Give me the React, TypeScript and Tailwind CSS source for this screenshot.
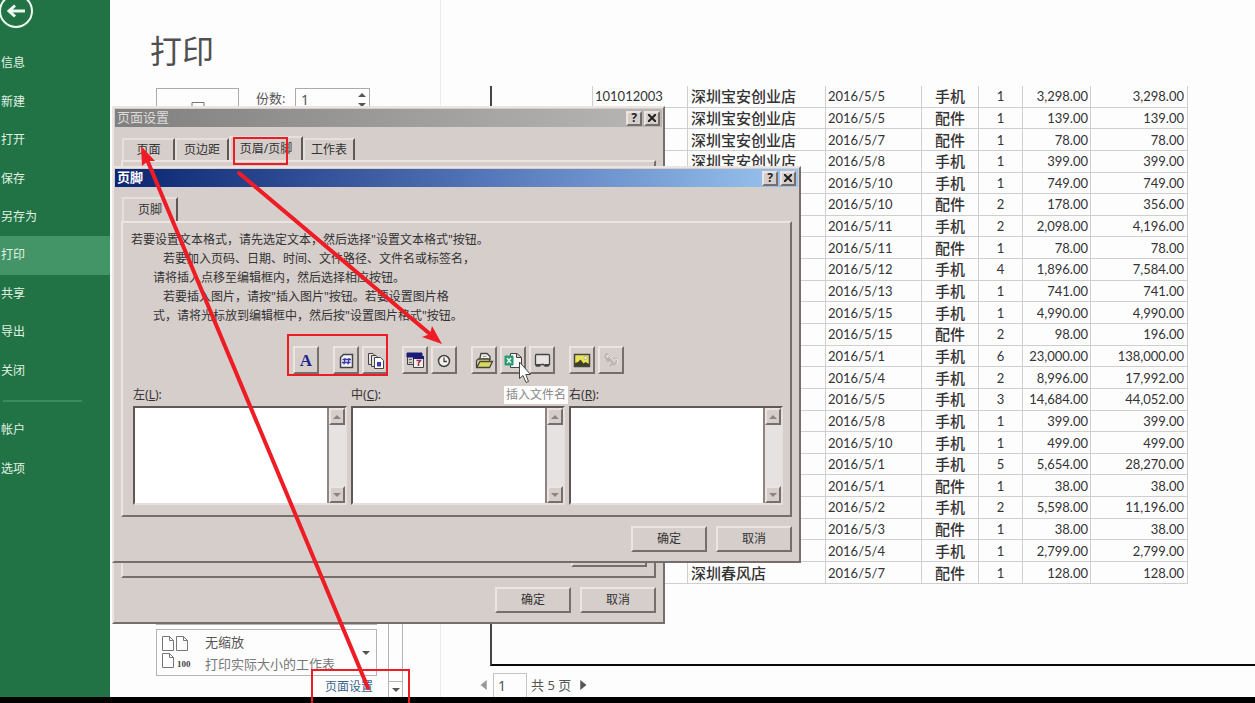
import type { ReactNode } from 'react';

const FONT = "font-['Noto_Sans','Noto_Sans_CJK_SC',sans-serif]";
const RAISED =
  'border-2 border-t-[#ebe4e1] border-l-[#ebe4e1] border-r-[#756e6b] border-b-[#756e6b] bg-[#d6cecb]';

const NAV = ['信息', '新建', '打开', '保存', '另存为', '打印', '共享', '导出', '关闭'];

// [id, shop, date, category, qty, price, amount]
const ROWS = [
  ['101012003', '深圳宝安创业店', '2016/5/5', '手机', '1', '3,298.00', '3,298.00'],
  ['', '深圳宝安创业店', '2016/5/5', '配件', '1', '139.00', '139.00'],
  ['', '深圳宝安创业店', '2016/5/7', '配件', '1', '78.00', '78.00'],
  ['', '深圳宝安创业店', '2016/5/8', '手机', '1', '399.00', '399.00'],
  ['', '', '2016/5/10', '手机', '1', '749.00', '749.00'],
  ['', '', '2016/5/10', '配件', '2', '178.00', '356.00'],
  ['', '', '2016/5/11', '手机', '2', '2,098.00', '4,196.00'],
  ['', '', '2016/5/11', '配件', '1', '78.00', '78.00'],
  ['', '', '2016/5/12', '手机', '4', '1,896.00', '7,584.00'],
  ['', '', '2016/5/13', '手机', '1', '741.00', '741.00'],
  ['', '', '2016/5/15', '手机', '1', '4,990.00', '4,990.00'],
  ['', '', '2016/5/15', '配件', '2', '98.00', '196.00'],
  ['', '', '2016/5/1', '手机', '6', '23,000.00', '138,000.00'],
  ['', '', '2016/5/4', '手机', '2', '8,996.00', '17,992.00'],
  ['', '', '2016/5/5', '手机', '3', '14,684.00', '44,052.00'],
  ['', '', '2016/5/8', '手机', '1', '399.00', '399.00'],
  ['', '', '2016/5/10', '手机', '1', '499.00', '499.00'],
  ['', '', '2016/5/1', '手机', '5', '5,654.00', '28,270.00'],
  ['', '', '2016/5/1', '配件', '1', '38.00', '38.00'],
  ['', '', '2016/5/2', '手机', '2', '5,598.00', '11,196.00'],
  ['', '', '2016/5/3', '配件', '1', '38.00', '38.00'],
  ['', '', '2016/5/4', '手机', '1', '2,799.00', '2,799.00'],
  ['', '深圳春风店', '2016/5/7', '配件', '1', '128.00', '128.00'],
];

const CELL = [
  'w-[95px] pl-[2px] text-left',
  'w-[138px] pl-[3px] text-left text-[15px] font-medium',
  'w-[96px] pl-[2px] text-left',
  'w-[57px] text-center text-[15px] font-medium',
  'w-[44px] text-center',
  'w-[68px] pr-[2px] text-right',
  'w-[97px] pr-[3px] text-right',
];

const Triangle = ({ d, className }: { d: string; className: string }) => (
  <svg className={className} viewBox="0 0 8 8" aria-hidden="true">
    <path d={d} fill="currentColor" />
  </svg>
);
const UP = 'M0 6L4 2L8 6Z';
const DOWN = 'M0 2L4 6L8 2Z';
const LEFT = 'M7 0L2 4L7 8Z';
const RIGHT = 'M1 0L6 4L1 8Z';

const Sidebar = () => (
  <nav className="w-[110px] shrink-0 bg-[#217346] text-xs text-[#e0f2e4]">
    <div className="h-11 overflow-hidden">
      <button aria-label="返回" className="-mt-1 block">
        <svg width="34" height="34" viewBox="0 0 34 34" fill="none" stroke="#eef8ee" strokeWidth="2">
          <circle cx="16" cy="15" r="16" />
          <path d="M9 15H25M15 9.500L9 15L15 20.500" strokeWidth="3" />
        </svg>
      </button>
    </div>
    <div className="grid h-[346px] grid-rows-9">
      {NAV.map((item) => (
        <button
          key={item}
          className={item === '打印' ? 'bg-[#439467] pl-px text-left' : 'pl-px text-left'}
        >
          {item}
        </button>
      ))}
    </div>
    <hr className="mt-[10px] mr-7 mb-2 ml-[3px] border-t-2 border-[#3d8a60]" />
    <button className="block h-[39px] w-full pl-px text-left">帐户</button>
    <button className="block h-[39px] w-full pl-px text-left">选项</button>
  </nav>
);

const Settings = () => (
  <section className="flex w-[331px] shrink-0 flex-col border-r border-[#ececec] text-[#555]">
    <h1 className="mt-7 ml-10 text-[32px] leading-[46px] text-[#505050]">打印</h1>
    <div className="mt-[14px] ml-[46px] flex items-start">
      <button
        aria-label="打印"
        className="flex h-20 w-[83px] justify-center border border-[#ababab] pt-3"
      >
        <svg width="32" height="32" viewBox="0 0 32 32" fill="none" stroke="#777">
          <path d="M10 10V1.500H22V10M3 10H29V24H3ZM9 18H23V30H9Z" />
        </svg>
      </button>
      <label htmlFor="copies" className="mt-px ml-[17px] w-[39px] text-[13px]">
        份数:
      </label>
      <div className="flex h-6 w-[75px] items-center border border-[#ababab] pr-[3px]">
        <input id="copies" defaultValue="1" className="w-full min-w-0 pl-[5px] text-sm outline-none" />
        <div className="flex flex-col gap-[2px]">
          <Triangle d={UP} className="h-2 w-2" />
          <Triangle d={DOWN} className="h-2 w-2" />
        </div>
      </div>
    </div>
    <div className="mt-auto flex">
      <div className="ml-[46px] w-[221px]">
        <div className="h-5 border border-t-0 border-[#b5b5b5]" />
        <div className="mt-1 flex h-[47px] items-center border border-[#b5b5b5] pr-[6px] pl-1">
          <svg width="30" height="36" viewBox="0 0 30 36" fill="none" stroke="#777">
            <path d="M1.500 1.500H8.500L12.500 5.500V15.500H1.500ZM8.500 1.500V5.500H12.500" />
            <path d="M15.500 1.500H22.500L26.500 5.500V15.500H15.500ZM22.500 1.500V5.500H26.500" />
            <path d="M1.500 18.500H8.500L12.500 22.500V32.500H1.500ZM8.500 18.500V22.500H12.500" />
            <text
              x="16"
              y="32"
              fontSize="9"
              fontWeight="700"
              stroke="none"
              fill="#444"
              fontFamily="Liberation Serif, serif"
            >
              100
            </text>
          </svg>
          <div className="ml-[14px] flex-1 text-[13px] leading-[22px]">
            <select
              aria-label="缩放"
              className="block h-[22px] w-full appearance-none bg-transparent outline-none"
            >
              <option>无缩放</option>
            </select>
            <p className="whitespace-nowrap text-[#777]">打印实际大小的工作表</p>
          </div>
          <Triangle d={DOWN} className="h-2 w-2" />
        </div>
        <div className="h-[21px] pr-1 text-right text-xs leading-[21px]">
          <a href="#" className="text-[#37648c]">
            页面设置
          </a>
        </div>
      </div>
      <div className="ml-[11px] flex w-[15px] flex-col border border-b-0 border-[#b5b5b5]">
        <div className="flex-1" />
        <button
          aria-label="向下滚动"
          className="flex h-4 items-center justify-center border-t border-[#b5b5b5]"
        >
          <Triangle d={DOWN} className="h-2 w-2" />
        </button>
      </div>
    </div>
  </section>
);

const Preview = () => (
  <section className="flex min-w-0 flex-1 flex-col pt-[86px]">
    <div className="ml-[49px] flex-1 border-b-2 border-l-2 border-b-[#0a0a0a] border-l-[#444]">
      <table className="ml-[100px] h-[498px] table-fixed border-collapse font-['Lato','Noto_Sans_CJK_SC',sans-serif] text-[13px] leading-[18px] text-[#333]">
        <tbody>
          {ROWS.map((row, r) => (
            <tr key={r}>
              {row.map((value, c) => (
                <td key={c} className={`border border-t-0 border-[#cfcfd2] py-0 ${CELL[c]}`}>
                  {value}
                </td>
              ))}
            </tr>
          ))}
        </tbody>
      </table>
    </div>
    <div className="flex h-[31px] items-end pl-[37px] text-[13px] text-[#555]">
      <button aria-label="上一页" className="flex h-6 items-center text-[#999]">
        <Triangle d={LEFT} className="h-[10px] w-[10px]" />
      </button>
      <input
        aria-label="页码"
        defaultValue="1"
        className="ml-[5px] h-6 w-[34px] border border-b-0 border-[#c4c4c4] pl-1 text-sm outline-none"
      />
      <span className="ml-1 leading-6">共 5 页</span>
      <button aria-label="下一页" className="ml-2 flex h-6 items-center text-[#555]">
        <Triangle d={RIGHT} className="h-[10px] w-[10px]" />
      </button>
    </div>
  </section>
);

const TitleBar = ({ title, className }: { title: string; className: string }) => (
  <header className={`flex h-[18px] items-center gap-[2px] px-[2px] text-[13px] ${className}`}>
    <h2 className="flex-1">{title}</h2>
    <button
      aria-label="帮助"
      className={`flex h-[15px] w-4 items-center justify-center text-xs font-bold text-[#222] ${RAISED}`}
    >
      ?
    </button>
    <button
      aria-label="关闭"
      className={`flex h-[15px] w-4 items-center justify-center ${RAISED}`}
    >
      <svg width="8" height="8" viewBox="0 0 8 8" stroke="#222" strokeWidth="2">
        <path d="M0 0L8 8M8 0L0 8" />
      </svg>
    </button>
  </header>
);

const Tab = ({ label, className }: { label: string; className: string }) => (
  <button
    role="tab"
    className={`border-t-2 border-r-2 border-l-2 border-t-[#e6dfdc] border-r-[#5f5856] border-l-[#e6dfdc] text-xs ${className}`}
  >
    {label}
  </button>
);

const Actions = () => (
  <footer className="mt-[9px] flex justify-end gap-[9px] pr-[6px] pb-2 text-xs">
    <button className={`h-[26px] w-[76px] ${RAISED}`}>确定</button>
    <button className={`h-[26px] w-[76px] ${RAISED}`}>取消</button>
  </footer>
);

const PageSetupDialog = () => (
  <div
    role="dialog"
    aria-label="页面设置"
    className={`absolute top-[106px] left-28 w-[553px] p-px text-[#333] ${RAISED}`}
  >
    <TitleBar title="页面设置" className="bg-linear-to-r from-[#808080] to-[#b9b7b5] text-[#dedad7]" />
    <div role="tablist" className="mt-[9px] flex h-6 items-end pl-[7px]">
      <Tab label="页面" className="h-[22px] w-[53px]" />
      <Tab label="页边距" className="h-[22px] w-[54px]" />
      <Tab label="页眉/页脚" className="h-6 w-[74px]" />
      <Tab label="工作表" className="h-[22px] w-[52px]" />
    </div>
    <div className={`mx-[6px] flex h-[418px] items-end justify-end pr-[7px] pb-[9px] ${RAISED}`}>
      <button aria-label="选项" className={`h-[26px] w-[76px] ${RAISED}`} />
    </div>
    <Actions />
  </div>
);

const ToolButton = ({ label, children }: { label: string; children: ReactNode }) => (
  <button
    aria-label={label}
    className={`flex h-7 w-[26px] items-center justify-center ${RAISED}`}
  >
    <svg width="20" height="20" viewBox="0 0 20 20" fill="none" stroke="#444">
      {children}
    </svg>
  </button>
);

const Toolbar = () => (
  <div role="toolbar" className="mt-[21px] ml-[160px] flex gap-[14px]">
    <ToolButton label="设置文本格式">
      <text
        x="10"
        y="16"
        textAnchor="middle"
        fontSize="17"
        fontWeight="700"
        fontFamily="Liberation Serif, serif"
        fill="#24248f"
        stroke="none"
      >
        A
      </text>
    </ToolButton>
    <div className="flex gap-[3px]">
      <ToolButton label="插入页码">
        <path d="M7.500 4.500H16.500V17.500H4.500V7.500Z" fill="#f4f4fa" strokeWidth="1.500" />
        <path d="M9 8L8 14.500M13 8L12 14.500M6.500 9.500H15M6 12.500H14.500" stroke="#3a3aa8" strokeWidth="1.300" />
      </ToolButton>
      <ToolButton label="插入页数">
        <path d="M3.500 3.500H8L10.500 6V14.500H3.500Z" fill="#e6e2e0" />
        <path d="M6.500 5.500H11L13.500 8V16.500H6.500Z" fill="#e6e2e0" />
        <path d="M9.500 7.500H15.500L18.500 10.500V18.500H9.500Z" fill="#fff" />
        <path d="M12 12H16V16.500H12Z" fill="#3b3bb5" stroke="none" />
      </ToolButton>
    </div>
    <div className="flex gap-[3px]">
      <ToolButton label="插入日期">
        <path d="M2.500 4.500H15.500V14.500H2.500Z" fill="#d0cccc" />
        <path d="M2 3H17V7H2Z" fill="#1b1b78" stroke="#1b1b78" />
        <path d="M8.500 6.500H18.500V17.500H8.500Z" fill="#f4eeee" />
        <path d="M8 7.500H19" stroke="#1b1b78" strokeWidth="3" />
        <path d="M4 9.500H7M4 12.500H7" stroke="#666" />
        <path d="M11.500 10.500H15.500L13.500 13V16" stroke="#a5304a" strokeWidth="1.500" />
      </ToolButton>
      <ToolButton label="插入时间">
        <circle cx="10" cy="11" r="5.500" fill="#f4f2f1" strokeWidth="1.500" />
        <path d="M10 7.500V11.500H13" strokeWidth="1.300" />
      </ToolButton>
    </div>
    <div className="flex gap-[3px]">
      <ToolButton label="插入文件路径">
        <path d="M5.500 10L7 3.500H13L16 6.500V10" fill="#f2f0ee" strokeWidth="1.300" />
        <path d="M9 6.500H12.500M8.500 8.500H14" stroke="#999" />
        <path d="M2.500 10.500L4.500 9H15.500V12M2.500 10.500V17.500H15.500L18.500 11.500H6L3 17" fill="#dbd95c" strokeWidth="1.300" />
      </ToolButton>
      <div className="relative">
        <ToolButton label="插入文件名">
          <path d="M7.500 3.500H14L18.500 7.500V17.500H7.500ZM13.500 3.500V7.500H18.500" fill="#f8f8f8" />
          <path d="M2 6H10V15H2Z" fill="#2b9a76" stroke="#2b9a76" />
          <path d="M4 8L8 13M8 8L4 13" stroke="#e8f5ee" strokeWidth="1.500" />
        </ToolButton>
        <span
          role="tooltip"
          className="absolute top-10 left-1 z-10 h-[18px] bg-[#fdfdfc] px-[2px] text-xs leading-[18px] whitespace-nowrap text-[#888]"
        >
          插入文件名
        </span>
        <svg className="absolute top-[15px] left-[19px] z-20 h-6 w-3" viewBox="0 0 12 24" aria-hidden="true">
          <path
            d="M0.500 1V17.500L4 14.500L7 21.500L9.500 20.500L6.800 13.500H11.500Z"
            fill="#fff"
            stroke="#444"
          />
        </svg>
      </div>
      <ToolButton label="插入数据表名称">
        <path d="M4.500 4.500H16.500Q17.500 4.500 17.500 5.500V14.500L16 16H13L11.500 14.500H9L7.500 16H4.500L3.500 14.500V5.500Q3.500 4.500 4.500 4.500Z" fill="#e9e4e2" strokeWidth="1.300" />
        <path d="M4 15H8M12.500 15H17" strokeWidth="2" />
      </ToolButton>
    </div>
    <div className="flex gap-[3px]">
      <ToolButton label="插入图片">
        <path d="M2.500 4.500H17.500V16.500H2.500Z" fill="#e9e455" strokeWidth="1.500" />
        <path d="M3 15V13L6 12L8.500 9.500L11.500 13.500L13.500 12L17 14V16H3Z" fill="#3f3f26" stroke="none" />
        <circle cx="13.500" cy="8" r="1.500" fill="#fff" stroke="#777" strokeWidth="0.500" />
      </ToolButton>
      <ToolButton label="设置图片格式">
        <path
          d="M4 6L6 4L9 7L6 10ZM8 9L12 13L9 16M13 8L16 9L15 13L12 15M6 12L10 9"
          stroke="#b8b0ad"
          strokeWidth="1.500"
        />
        <path d="M5 7L7 5L10 8M14 9L17 10L16 14" stroke="#efeae7" />
      </ToolButton>
    </div>
  </div>
);

const Section = ({ id, name, hotkey }: { id: string; name: string; hotkey: string }) => (
  <div>
    <label htmlFor={id} className="block h-4 text-xs leading-4">
      {name}(<u>{hotkey}</u>):
    </label>
    <div className="mt-[3px] flex h-[99px] border-2 border-t-[#5f5856] border-r-[#e6dfdc] border-b-[#e6dfdc] border-l-[#5f5856] bg-white">
      <textarea id={id} className="min-w-0 flex-1 resize-none bg-white outline-none" />
      <div className="flex w-[18px] flex-col justify-between border-l-2 border-[#8c8583] bg-[#e6e2e2] text-[#8b8482]">
        <button aria-label="向上" className={`flex h-[17px] items-center justify-center ${RAISED}`}>
          <Triangle d={UP} className="h-2 w-2" />
        </button>
        <button aria-label="向下" className={`flex h-[17px] items-center justify-center ${RAISED}`}>
          <Triangle d={DOWN} className="h-2 w-2" />
        </button>
      </div>
    </div>
  </div>
);

const FooterDialog = () => (
  <div
    role="dialog"
    aria-label="页脚"
    className={`absolute top-[166px] left-28 w-[689px] p-px text-[#333] ${RAISED}`}
  >
    <TitleBar title="页脚" className="bg-linear-to-r from-[#0c2570] via-[#4f6fb4] to-[#9cc6f0] font-bold text-white" />
    <div role="tablist" className="mt-[10px] flex h-6 pl-[7px]">
      <Tab label="页脚" className="h-6 w-[56px]" />
    </div>
    <div className={`mx-[6px] pt-[7px] pr-[7px] pb-[10px] pl-[10px] ${RAISED}`}>
      <div className="-ml-[2px] text-xs leading-[19px]">
        <p>若要设置文本格式，请先选定文本，然后选择"设置文本格式"按钮。</p>
        <p className="pl-8">若要加入页码、日期、时间、文件路径、文件名或标签名，</p>
        <p className="pl-[22px]">请将插入点移至编辑框内，然后选择相应按钮。</p>
        <p className="pl-8">若要插入图片，请按"插入图片"按钮。若要设置图片格</p>
        <p className="pl-[22px]">式，请将光标放到编辑框中，然后按"设置图片格式"按钮。</p>
      </div>
      <Toolbar />
      <div className="mt-[13px] grid grid-cols-3 gap-1">
        <Section id="left" name="左" hotkey="L" />
        <Section id="center" name="中" hotkey="C" />
        <Section id="right" name="右" hotkey="R" />
      </div>
    </div>
    <Actions />
  </div>
);

// red marks drawn over the windows
const Annotations = () => (
  <svg
    className="pointer-events-none absolute top-0 left-0 h-[703px] w-[460px]"
    viewBox="0 0 460 703"
    fill="none"
    stroke="#ee1c25"
    aria-hidden="true"
  >
    <g strokeWidth="2">
      <rect x="234" y="138" width="53" height="26" />
      <rect x="288" y="335" width="99" height="40" />
      <rect x="312" y="670" width="97" height="40" />
    </g>
    <g strokeWidth="4" strokeLinecap="round">
      <path d="M368 688L148 162" />
      <path d="M239 173L430 334" />
    </g>
    <g fill="#ee1c25" stroke="none">
      <path d="M141 146L155 161L148 161L142 166Z" />
      <path d="M442 344L432 326L430 334L422 337Z" />
    </g>
  </svg>
);

export default function App() {
  return (
    <div className={`relative flex min-h-screen flex-col overflow-hidden bg-[#fefdfe] ${FONT}`}>
      <main className="flex flex-1">
        <Sidebar />
        <Settings />
        <Preview />
      </main>
      <div className="h-[6px] bg-black" />
      <PageSetupDialog />
      <FooterDialog />
      <Annotations />
    </div>
  );
}
